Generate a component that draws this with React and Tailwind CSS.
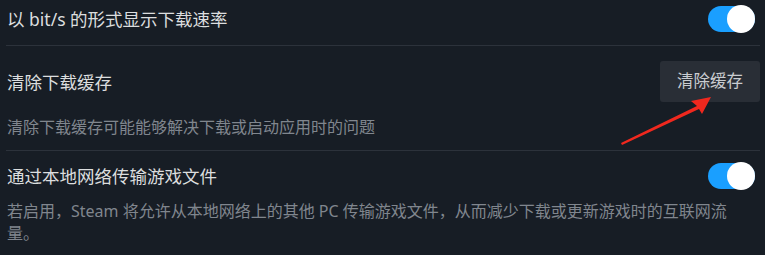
import React from 'react';

const font = { fontFamily: '"Noto Sans", "Noto Sans CJK SC", sans-serif' };

function Toggle() {
  return (
    <div className="relative mr-[5px] h-[26px] w-[47px] shrink-0 rounded-full bg-[#1a9fff]">
      <div className="absolute right-0 top-[-1px] h-[28px] w-[28px] rounded-full bg-white" />
    </div>
  );
}

function Arrow() {
  return (
    <svg className="pointer-events-none absolute left-0 top-0" width="765" height="255">
      <path d="M621 143 L697 106 L691 101 L711 97 L702 114 L699 109 L622 145 Z" fill="#f0281e" />
    </svg>
  );
}

export default function App() {
  return (
    <div className="relative h-[255px] w-[765px] overflow-hidden bg-[#171d25] pl-[6px] pr-[5px]" style={font}>
      <div className="flex items-center justify-between border-b border-[#2c323b] pb-[13px] pt-[6px]">
        <span className="pl-[1px] text-[17.5px] leading-[26px] text-[#dcdedf]">以 bit/s 的形式显示下载速率</span>
        <Toggle />
      </div>

      <div className="border-b border-[#2c323b] pb-[12px] pt-[15px]">
        <div className="flex items-center justify-between">
          <span className="pl-[1px] text-[17.5px] leading-[26px] text-[#dcdedf]">清除下载缓存</span>
          <button className="h-[41px] w-[100px] rounded-[3px] bg-[#292e36] text-[16.5px] text-[#c9ccd0]">清除缓存</button>
        </div>
        <p className="mt-[14px] pl-[1px] text-[16px] leading-[22px] text-[#80868e]">清除下载缓存可能能够解决下载或启动应用时的问题</p>
      </div>

      <div className="pt-[12px]">
        <div className="flex items-center justify-between">
          <span className="pl-[1px] text-[17.5px] leading-[26px] text-[#dcdedf]">通过本地网络传输游戏文件</span>
          <Toggle />
        </div>
        <p className="mt-[11px] w-[745px] pl-[1px] text-[16px] leading-[22px] text-[#80868e]">
          若启用，Steam 将允许从本地网络上的其他 PC 传输游戏文件，从而减少下载或更新游戏时的互联网流量。
        </p>
      </div>

      <Arrow />
    </div>
  );
}
